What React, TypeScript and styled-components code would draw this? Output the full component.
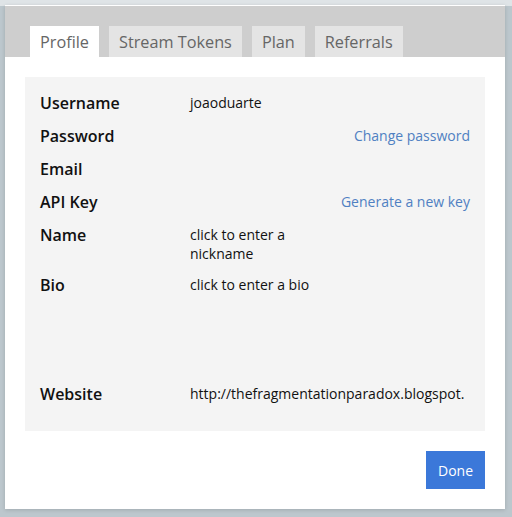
import * as React from 'react';
import styled, { createGlobalStyle } from 'styled-components';

const GlobalStyle = createGlobalStyle`
  html, body {
    margin: 0;
    padding: 0;
    background: #bfc9cf;
    font-family: "Open Sans", "Liberation Sans", sans-serif;
  }
`;

const Backdrop = styled.div`
  width: 512px;
  height: 517px;
  padding: 5px;
  box-sizing: border-box;
  background: linear-gradient(#dfe4e7 0, #dfe4e7 6px, #bcc7cd 6px);
`;

const Modal = styled.div`
  width: 500px;
  height: 504px;
  background: #fff;
  display: flex;
  flex-direction: column;
  box-shadow: 0 1px 4px rgba(0, 0, 0, 0.15);
`;

const TabBar = styled.div`
  display: flex;
  gap: 10px;
  padding: 20px 25px 0;
  margin-top: 1px;
  height: 51px;
  box-sizing: border-box;
  background: #cecece;
  align-items: flex-end;
`;

const Tab = styled.div<{ $active?: boolean }>`
  height: 31px;
  padding: 0 10px;
  display: flex;
  align-items: center;
  font-size: 16.25px;
  color: #666;
  background: ${(p) => (p.$active ? '#fff' : '#e4e4e4')};
`;

const Body = styled.div`
  padding: 20px 20px 0;
`;

const Panel = styled.div`
  background: #f4f4f4;
  padding: 15px;
  height: 354px;
  box-sizing: border-box;
`;

const Row = styled.div<{ $tall?: number }>`
  display: flex;
  align-items: flex-start;
  margin-bottom: 11px;
  min-height: ${(p) => p.$tall ?? 22}px;
`;

const Label = styled.div`
  width: 150px;
  flex: none;
  font-size: 16px;
  font-weight: 600;
  line-height: 22px;
  color: #111;
`;

const Value = styled.div<{ $narrow?: boolean }>`
  font-size: 14px;
  line-height: 19px;
  padding-top: 1px;
  color: #111;
  width: ${(p) => (p.$narrow ? '135px' : 'auto')};
  flex: ${(p) => (p.$narrow ? 'none' : '1')};
  white-space: ${(p) => (p.$narrow ? 'normal' : 'nowrap')};
`;

const Link = styled.div`
  margin-left: auto;
  font-size: 14px;
  line-height: 20px;
  padding-top: 1px;
  color: #4f80c2;
`;

const Footer = styled.div`
  display: flex;
  justify-content: flex-end;
  padding: 20px;
`;

const DoneButton = styled.button`
  width: 59px;
  height: 38px;
  border: none;
  background: #3b78d9;
  color: #fff;
  font-family: inherit;
  font-size: 14px;
`;

export default function App() {
  return (
    <Backdrop>
      <GlobalStyle />
      <Modal>
        <TabBar>
          <Tab $active>Profile</Tab>
          <Tab>Stream Tokens</Tab>
          <Tab>Plan</Tab>
          <Tab>Referrals</Tab>
        </TabBar>
        <Body>
          <Panel>
            <Row>
              <Label>Username</Label>
              <Value>joaoduarte</Value>
            </Row>
            <Row>
              <Label>Password</Label>
              <Link>Change password</Link>
            </Row>
            <Row>
              <Label>Email</Label>
            </Row>
            <Row>
              <Label>API Key</Label>
              <Link>Generate a new key</Link>
            </Row>
            <Row>
              <Label>Name</Label>
              <Value $narrow>click to enter a nickname</Value>
            </Row>
            <Row $tall={98}>
              <Label>Bio</Label>
              <Value>click to enter a bio</Value>
            </Row>
            <Row>
              <Label>Website</Label>
              <Value>http://thefragmentationparadox.blogspot.</Value>
            </Row>
          </Panel>
        </Body>
        <Footer>
          <DoneButton>Done</DoneButton>
        </Footer>
      </Modal>
    </Backdrop>
  );
}
